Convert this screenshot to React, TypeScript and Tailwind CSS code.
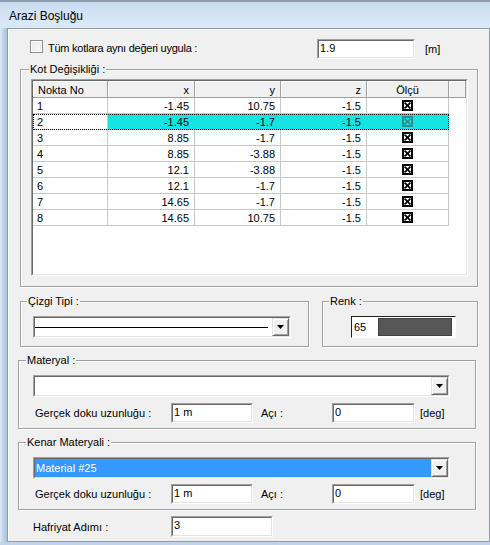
import React from "react";

function Sunken({
  className = "",
  innerClassName = "",
  children,
}: {
  className?: string;
  innerClassName?: string;
  children?: React.ReactNode;
}) {
  return (
    <div className={`border border-t-[#a0a0a0] border-l-[#a0a0a0] border-r-white border-b-white ${className}`}>
      <div className={`h-full border border-t-[#696969] border-l-[#696969] border-r-[#e3e3e3] border-b-[#e3e3e3] ${innerClassName}`}>
        {children}
      </div>
    </div>
  );
}

function DropBtn() {
  return (
    <div className="w-[17px] h-full shrink-0 bg-[#f0f0f0] border border-t-[#e3e3e3] border-l-[#e3e3e3] border-r-[#696969] border-b-[#696969] shadow-[inset_1px_1px_0_#fff,inset_-1px_-1px_0_#a0a0a0] flex items-center justify-center">
      <svg width="7" height="4" viewBox="0 0 7 4">
        <polygon points="0,0 7,0 3.5,4" fill="#000" />
      </svg>
    </div>
  );
}

function Group({
  label,
  className = "",
  labelClass = "",
  children,
}: {
  label: string;
  className?: string;
  labelClass?: string;
  children?: React.ReactNode;
}) {
  return (
    <div className={`shrink-0 border border-[#a0a0a0] shadow-[inset_1px_1px_0_#fff,1px_1px_0_#fff] ${className}`}>
      <div className={`-mt-[8px] px-[1px] w-fit h-[14px] leading-[14px] bg-[#f0f0f0] whitespace-nowrap ${labelClass}`}>
        {label}
      </div>
      {children}
    </div>
  );
}

function Check({ sel }: { sel?: boolean }) {
  const c = sel ? "#2f8c8c" : "#000";
  return (
    <svg width="11" height="11" viewBox="0 0 11 11">
      <rect x="1" y="1" width="9" height="9" fill="none" stroke={c} strokeWidth="2" />
      <line x1="2.6" y1="2.6" x2="8.4" y2="8.4" stroke={c} strokeWidth="1.7" />
      <line x1="8.4" y1="2.6" x2="2.6" y2="8.4" stroke={c} strokeWidth="1.7" />
    </svg>
  );
}

const rows = [
  ["1", "-1.45", "10.75", "-1.5"],
  ["2", "-1.45", "-1.7", "-1.5"],
  ["3", "8.85", "-1.7", "-1.5"],
  ["4", "8.85", "-3.88", "-1.5"],
  ["5", "12.1", "-3.88", "-1.5"],
  ["6", "12.1", "-1.7", "-1.5"],
  ["7", "14.65", "-1.7", "-1.5"],
  ["8", "14.65", "10.75", "-1.5"],
];

const hdr =
  "h-full shrink-0 bg-[#f0f0f0] border-r border-b border-[#a0a0a0] shadow-[inset_1px_1px_0_#fff] pt-[2px] leading-[14px]";

function Table() {
  return (
    <Sunken className="ml-[10px] mt-[3px] w-[437px] h-[197px]" innerClassName="bg-white overflow-hidden flex flex-col">
      <div className="flex h-[17px] shrink-0">
        <div className={`${hdr} w-[75px] pl-[5px]`}>Nokta No</div>
        <div className={`${hdr} w-[87px] pr-[5px] text-right`}>x</div>
        <div className={`${hdr} w-[86px] pr-[5px] text-right`}>y</div>
        <div className={`${hdr} w-[86px] pr-[5px] text-right`}>z</div>
        <div className={`${hdr} w-[82px] text-center`}>Ölçü</div>
        <div className={`${hdr} flex-1`} />
      </div>
      {rows.map((r, i) => {
        const sel = i === 1;
        const cell = sel
          ? "bg-[#14e4e4] border-r border-b border-[#14e4e4]"
          : "border-r border-b border-[#c8c8c8]";
        return (
          <div
            key={i}
            className={`flex h-[16px] w-[416px] shrink-0 ${sel ? "outline-1 outline-dotted outline-black -outline-offset-1" : ""}`}
          >
            <div className="w-[75px] h-full border-r border-b border-[#c8c8c8] pl-[4px] pt-[1px] leading-[14px] bg-white">
              {r[0]}
            </div>
            <div className={`w-[87px] h-full ${cell} pr-[5px] pt-[1px] leading-[14px] text-right`}>{r[1]}</div>
            <div className={`w-[86px] h-full ${cell} pr-[5px] pt-[1px] leading-[14px] text-right`}>{r[2]}</div>
            <div className={`w-[86px] h-full ${cell} pr-[5px] pt-[1px] leading-[14px] text-right`}>{r[3]}</div>
            <div className={`w-[82px] h-full ${cell} flex items-center justify-center`}>
              <Check sel={sel} />
            </div>
          </div>
        );
      })}
    </Sunken>
  );
}

function TextBox({ className = "", value }: { className?: string; value: string }) {
  return (
    <Sunken className={`shrink-0 ${className}`} innerClassName="bg-white pl-[1px] leading-[14px] whitespace-nowrap">
      {value}
    </Sunken>
  );
}

function DokuRow() {
  return (
    <div className="flex items-center ml-[16px] h-[20px] shrink-0">
      <div className="w-[136px] shrink-0 whitespace-nowrap">Gerçek doku uzunluğu :</div>
      <TextBox className="w-[82px] h-[20px]" value="1 m" />
      <div className="ml-[8px] w-[71px] shrink-0">Açı :</div>
      <TextBox className="w-[83px] h-[20px]" value="0" />
      <div className="ml-[5px]">[deg]</div>
    </div>
  );
}

export default function App() {
  return (
    <div className="w-[490px] h-[545px] overflow-hidden flex flex-col bg-[#bfd4ea] font-['Liberation_Sans',Arial,sans-serif] text-[11px] leading-[14px] text-black">
      <div className="h-[28px] shrink-0 flex flex-col bg-gradient-to-b from-[#c4d8ed] via-[#d4e4f5] to-[#dbe8f7]">
        <div className="h-[2px] shrink-0 bg-[#8f9dac]" />
        <div className="flex-1 flex items-center pl-[9px] pt-[1px] text-[12px]">Arazi Boşluğu</div>
      </div>
      <div className="flex h-[514px] shrink-0">
        <div className="w-[7px] shrink-0 bg-gradient-to-r from-[#dde9f6] via-[#bcd2ea] to-[#a9c1dd]" />
        <div className="w-[483px] shrink-0 flex flex-col bg-[#f0f0f0] border border-[#8e9aa6] shadow-[inset_1px_1px_0_#fff]">
          {/* top row */}
          <div className="mt-[10px] h-[20px] flex items-start shrink-0">
            <div className="w-[309px] shrink-0 flex items-start">
              <div className="ml-[22px] mt-[1px] w-[13px] h-[13px] border border-[#8e8f8f] bg-gradient-to-br from-[#e6e6e6] to-white shadow-[inset_0_0_0_1px_#fff,inset_0_0_0_2px_#ececec]" />
              <div className="ml-[5px] mt-[2px] whitespace-nowrap tracking-[-0.25px]">Tüm kotlara aynı değeri uygula :</div>
            </div>
            <TextBox className="w-[98px] h-[20px]" value="1.9" />
            <div className="ml-[10px] mt-[3px]">[m]</div>
          </div>

          {/* Kot Değişikliği */}
          <Group label="Kot Değişikliği :" className="mt-[10px] ml-[12px] w-[458px] h-[218px]" labelClass="ml-[8px]">
            <Table />
          </Group>

          {/* Çizgi / Renk */}
          <div className="mt-[14px] flex shrink-0">
            <Group label="Çizgi Tipi :" className="ml-[12px] w-[289px] h-[46px]" labelClass="ml-[6px]">
              <Sunken className="ml-[12px] mt-[8px] w-[258px] h-[22px]" innerClassName="flex bg-white">
                <div className="flex-1 flex items-center pr-[4px]">
                  <div className="w-full h-[1px] bg-black" />
                </div>
                <DropBtn />
              </Sunken>
            </Group>
            <Group label="Renk :" className="ml-[13px] w-[156px] h-[46px]" labelClass="ml-[6px]">
              <div className="ml-[28px] mt-[8px] w-[105px] h-[22px] border border-t-[#202020] border-l-[#202020] border-r-white border-b-white flex bg-white">
                <div className="w-[26px] shrink-0 pl-[2px] flex items-center">65</div>
                <div className="w-[74px] my-[1px] bg-[#575757] border border-[#404040]" />
              </div>
            </Group>
          </div>

          {/* Materyal */}
          <Group label="Materyal :" className="mt-[13px] ml-[10px] w-[458px] h-[69px]" labelClass="ml-[7px]">
            <Sunken className="ml-[14px] mt-[8px] w-[417px] h-[22px]" innerClassName="flex bg-white">
              <div className="flex-1" />
              <DropBtn />
            </Sunken>
            <div className="mt-[6px]">
              <DokuRow />
            </div>
          </Group>

          {/* Kenar Materyali */}
          <Group label="Kenar Materyali :" className="mt-[13px] ml-[10px] w-[458px] h-[68px]" labelClass="ml-[7px]">
            <Sunken className="ml-[14px] mt-[8px] w-[417px] h-[22px]" innerClassName="flex bg-[#3399ff]">
              <div className="flex-1 flex items-center pl-[1px] text-white">Material #25</div>
              <DropBtn />
            </Sunken>
            <div className="mt-[5px]">
              <DokuRow />
            </div>
          </Group>

          {/* Hafriyat */}
          <div className="mt-[6px] flex items-center h-[21px] shrink-0">
            <div className="ml-[25px] w-[138px] shrink-0 whitespace-nowrap">Hafriyat Adımı :</div>
            <TextBox className="w-[102px] h-[21px]" value="3" />
          </div>
        </div>
      </div>
      <div className="flex-1 bg-[#bfd4ea]" />
    </div>
  );
}
